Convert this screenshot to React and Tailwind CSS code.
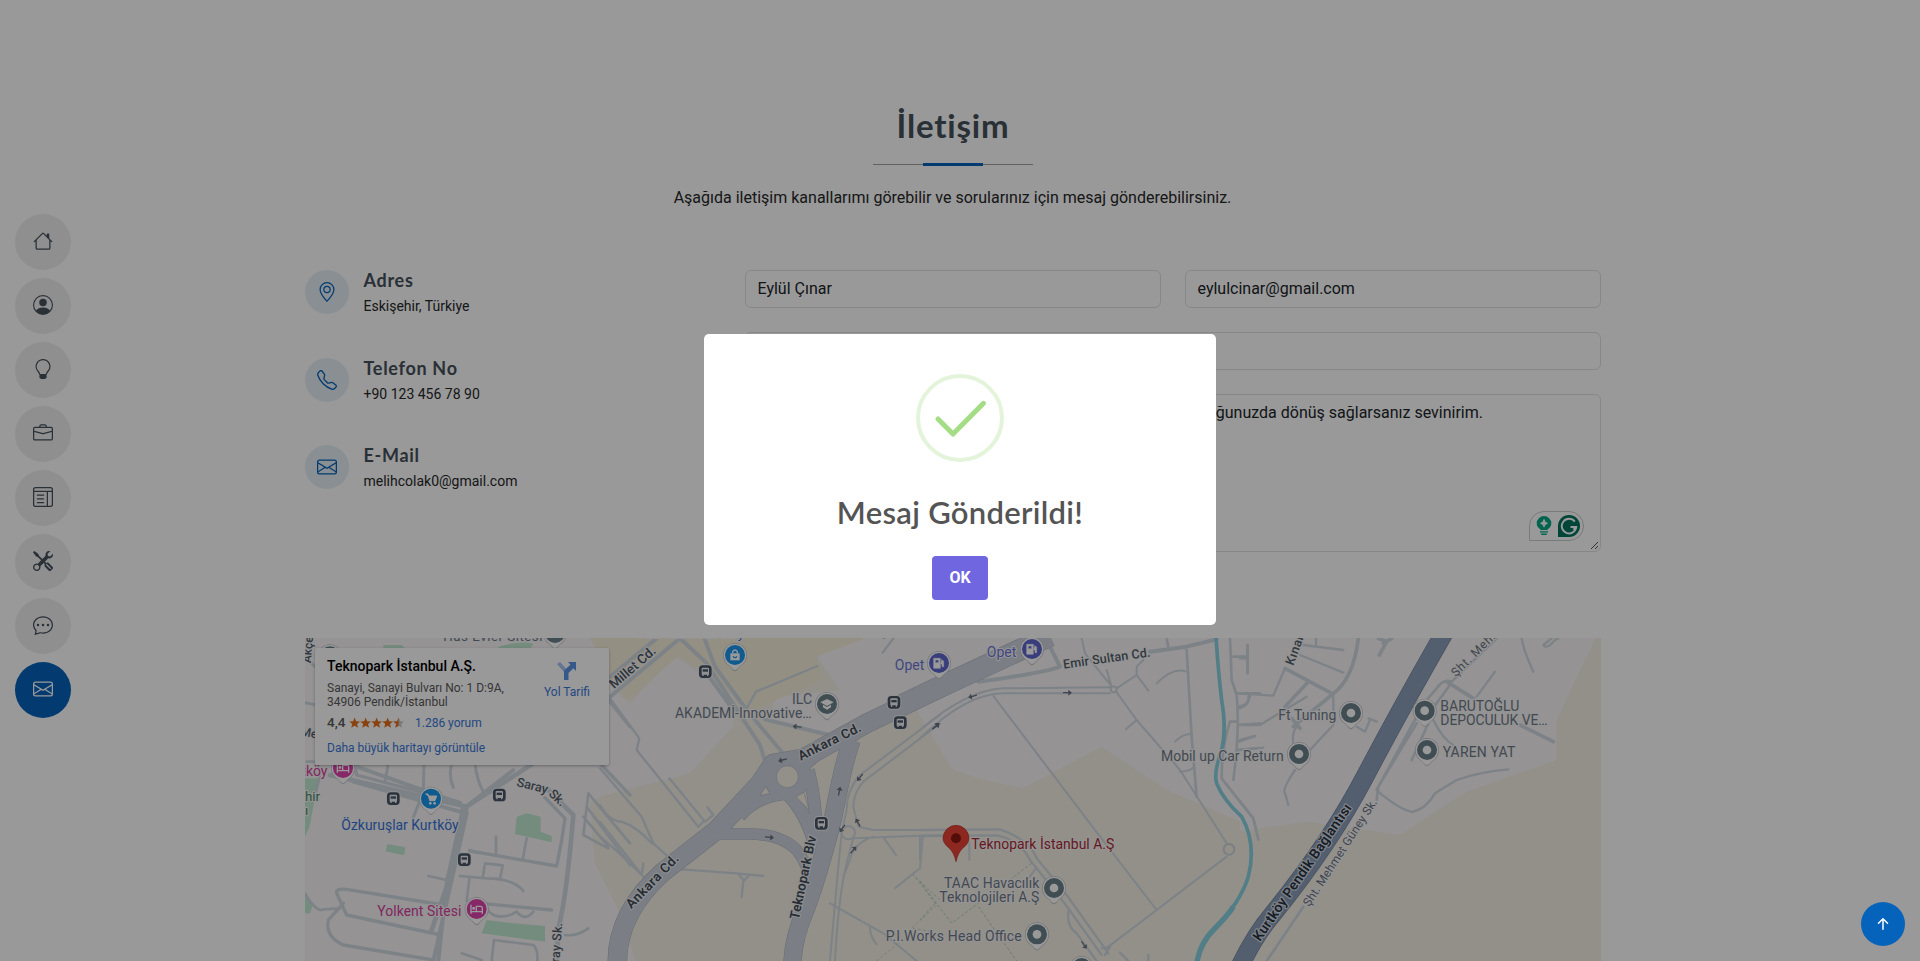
import React from "react";
import {
  BsHouse, BsPersonCircle, BsLightbulb, BsBriefcase, BsLayoutTextWindow, BsTools, BsChatDots,
  BsEnvelope, BsGeoAlt, BsTelephone, BsArrowUpShort,
} from "react-icons/bs";

const NAV = [BsHouse, BsPersonCircle, BsLightbulb, BsBriefcase, BsLayoutTextWindow, BsTools, BsChatDots, BsEnvelope];

const INFO = [
  { icon: BsGeoAlt, title: "Adres", text: "Eskişehir, Türkiye" },
  { icon: BsTelephone, title: "Telefon No", text: "+90 123 456 78 90" },
  { icon: BsEnvelope, title: "E-Mail", text: "melihcolak0@gmail.com" },
];

/* ---------- map ---------- */

// The map is drawn in four tiles, each with three units to a pixel.
const Tile = ({ x, children }) => <g transform={`translate(${x} 630) scale(.33333)`}>{children}</g>;
const TILES = { a: 300, b: 600, c: 920, d: 1240 };

const MINOR = {
  a: [
    ["M20 85L45 110M15 218L50 225M265 400L255 455M372 400L370 480M455 400Q445 440 460 472M525 400Q530 450 550 485M372 480L340 562", 9],
    ["M0 420L60 435M60 435L45 500M680 625L668 690M588 620L588 675M525 665L508 660M548 745L555 700L608 706L600 748M385 738L440 750M480 738L560 745Q640 745 670 783M508 748L500 812M545 815Q570 860 600 860Q630 860 650 845Q670 870 690 855L700 845M15 790Q50 850 70 838L120 835M485 970L545 990M575 993L582 930L700 945Q715 960 712 993M795 915Q830 920 865 895M20 395L60 395M990 705L860 530M850 615L925 655M850 615L865 490L990 640M850 560L925 650", 8],
    ["M440 750L500 550M510 663L770 708Q785 640 795 565L735 503M520 818L755 840M140 855L410 912M110 790Q105 775 140 778L430 825M130 820L85 870Q75 920 130 945L400 990M110 790L140 855M165 405L170 435L480 517M900 400L990 495M930 215L990 290", 10],
    ["M90 435L500 530L700 400M500 530L465 700L395 900M745 480L820 555Q800 800 775 895L770 993", 14],
    ["M170 410L480 520M160 455L480 545L640 420M500 550L400 993M440 760L415 993M490 530L440 760", 12],
  ],
  b: [
    ["M30 205L118 325L110 360L295 590L310 575M208 445L315 575L340 555L322 532M0 415L125 560L160 640L210 685M0 525Q30 575 65 575Q110 590 155 640M0 575L130 740M0 620Q50 660 125 735L130 700M245 718L410 730L490 738M415 732L432 752L448 735M430 752L425 802M210 690L180 730M440 235L468 185L652 108M848 68L880 25", 7],
    ["M0 165L170 25M25 205L240 25L320 100L480 345L500 410M315 30L345 110L440 240L545 365M320 130L400 240M495 268L700 318", 12],
    ["M1020 255L780 435Q740 480 740 540L725 610Q715 700 690 993M1020 280L790 455Q760 490 760 530L775 590L820 600L1020 600M1020 615L760 625L740 700Q715 800 705 993M820 620Q760 640 750 690L730 740", 6],
    ["M690 820L850 910L950 993M810 890Q810 920 830 943M850 622L888 675M968 622L960 715L885 775", 6],
  ],
  c: [
    ["M0 300Q140 180 250 175L570 172M0 325Q140 190 250 190L570 190M220 198L540 620L710 840L565 950M710 840L920 680M585 180L650 270L780 420L920 640M650 270L618 298M590 175L650 135L685 182M650 135L650 110L670 90M710 160Q760 110 800 125M485 25L495 70L580 175M560 120L575 172M765 335Q790 310 815 312M780 425Q810 425 822 410M0 620L0 690M148 640V690M350 712L325 745", 6],
    ["M800 60L815 320L830 500M740 25L745 50M930 25L935 150L950 195Q960 300 940 450M940 80L983 80M983 45V130M950 190L1020 190M955 230Q985 230 990 195M955 285L1020 280M955 335L1005 318M930 275H950M930 275Q905 350 905 445L1000 565L1015 628M955 360L1010 355", 8],
    ["M0 600L240 598Q330 630 350 685L440 795L565 970M0 618L230 616Q300 630 330 690L430 815L545 975M445 845Q440 890 470 910L530 993M545 955L570 950L555 975M600 968L625 993M685 975V993", 7],
    ["M175 155L250 145Q400 120 420 110L390 50M690 65L800 50L890 28", 12],
  ],
  d: [
    ["M0 190L100 197L135 115M22 45V130M0 85H22M180 75L310 128M190 45L310 60M228 25V45M280 190V240L280 285L210 360M0 285L60 285L200 200M0 235Q30 225 25 195M0 330L45 318M0 358L70 353M385 265L410 275M350 290L375 305L390 270M170 290Q155 310 160 340M165 420Q125 480 135 490L145 525M0 515L40 565L55 628M415 485Q480 540 517 546Q560 535 585 490L650 450Q720 425 805 418M765 125L710 200M580 270Q610 330 640 345M845 25Q850 60 880 125M910 45Q920 60 945 30L955 25M910 45L935 25", 7],
    ["M355 25Q340 150 275 195L160 290M135 115L275 190M205 155L135 230M155 265L180 295M840 285L940 335M415 25L440 35L418 75M620 155L700 205M455 25L430 40", 11],
    ["M635 155Q610 145 590 175L560 210M630 165L575 240M640 150L770 25M530 280L415 470L410 510M565 280L515 390M190 830L80 993M530 260L410 480", 8],
  ],
};

const MAJOR = {
  b: [
    ["M1080 145L800 280L610 385L520 400L480 460L350 600L190 725Q50 850 52 1000", 56],
    ["M755 330Q730 400 700 560Q660 720 620 830Q580 920 577 1000", 52],
    ["M600 420Q660 350 770 310M625 420Q650 520 650 640M560 490Q620 550 645 650", 36],
    ["M350 612H440Q540 610 590 660Q615 690 630 740M420 560Q470 500 560 492", 32],
  ],
  c: [["M-60 228L40 180L390 18", 62]],
};

const Arrow = ({ x, y, r }) => (
  <path transform={`translate(${x} ${y}) rotate(${r})`} d="M-13 -2H3V-9L14 0L3 9V2H-13Z" fill="#6b7280" />
);

const Bus = ({ x, y }) => (
  <g transform={`translate(${x} ${y})`}>
    <rect x="-22" y="-22" width="44" height="44" rx="14" fill="#eef2f6" />
    <rect x="-19" y="-19" width="38" height="38" rx="11" fill="#4a5664" />
    <path d="M-11 -9Q-11 -12 -8 -12H8Q11 -12 11 -9V9H9V13H5V9H-5V13H-9V9H-11Z" fill="#eef2f6" />
    <path d="M-8 -7H8V0H-8Z" fill="#4a5664" />
  </g>
);

const Pin = ({ x, y, c, children }) => (
  <g transform={`translate(${x} ${y})`}>
    <path d="M0 48Q-6 46 -15 34Q-36 22 -36 -1A36 36 0 1 1 36 -1Q36 22 15 34Q6 46 0 48Z" fill="#c4c4c8" />
    <path d="M0 45Q-6 43 -15 32Q-34 20 -34 -1A34 34 0 1 1 34 -1Q34 20 15 32Q6 43 0 45Z" fill="#fff" />
    <circle r="30" cy="-1" fill={c} />
    {children || <circle r="13" cy="-1" fill="#fff" />}
  </g>
);

const Bed = () => (
  <g fill="none" stroke="#fff" strokeWidth="4">
    <path d="M-17 -14V13M-17 7H17M17 13V-4Q17 -9 12 -9H-1V7" />
    <circle cx="-9" cy="-3" r="2.5" fill="#fff" />
  </g>
);
const Pump = () => <path d="M-16 -15H4V15H-16ZM-11 -10V-2H-1V-10ZM5 2H9V10H14V-6L8 -12" fill="#fff" fillRule="evenodd" stroke="#fff" strokeWidth="1.5" />;

const Label = ({ x, y, r = 0, size = 42, fill = "#717a86", w = 400, anchor = "start", halo = "#f6f5f6", ls = 0, len, children }) => (
  <text
    transform={`translate(${x} ${y}) rotate(${r})`} fontSize={size} fontWeight={w} fill={fill} textAnchor={anchor}
    stroke={halo} strokeWidth="7" strokeLinejoin="round" letterSpacing={ls} textLength={len}
    className="[paint-order:stroke]"
  >
    {children}
  </text>
);

function MapDrawing() {
  return (
    <svg viewBox="305 638 1296 323" width="1296" height="323" className="block" fontFamily="Roboto, sans-serif">
      <rect x="305" y="638" width="1296" height="323" fill="#f4f0e5" />
      <Tile x={TILES.a}>
        <path d="M0 0H860L930 165L990 220L1125 78L1300 200V290L1170 430L900 500L870 520L885 700L960 850L1010 1000H0Z" fill="#f8f5f7" />
        <path d="M865 0H1240L1290 190L1140 75L980 210L930 140Z" fill="#f7efdb" />
        <path d="M650 560L680 550L722 560V605L755 618V637L645 612ZM262 642L316 652L312 676L257 664ZM560 870L640 880L735 888V935L545 910ZM15 445L58 445L45 505H15ZM15 505H45L28 590L15 620ZM15 790L38 825L30 850H15ZM600 48Q680 30 700 42L690 58H590ZM250 45H305L320 60H250Z" fill="#c2ead2" />
      </Tile>
      <Tile x={TILES.b}>
        <path d="M650 80L770 20H1020V250L940 240L870 270L720 320L495 270L530 200L720 180Z" fill="#f8f5f7" />
        <path d="M340 0H860L650 80L665 150L440 250L400 200Z" fill="#f7efdb" />
      </Tile>
      <Tile x={TILES.c}>
        <path d="M-60 0H1000V590L950 570L740 480L545 350L310 475Q180 450 100 420L30 310L-60 160Z" fill="#f8f5f7" />
      </Tile>
      <Tile x={TILES.d}>
        <path d="M0 0H1080L1050 60L950 270V390L680 485L480 615L200 575L0 605Z" fill="#f8f5f7" />
      </Tile>
      {Object.entries(MINOR).map(([k, list]) => (
        <Tile key={k} x={TILES[k]}>
          {list.map(([d, w]) => (
            <path key={d} d={d} fill="none" stroke="#d0d9e2" strokeWidth={w} strokeLinejoin="round" strokeLinecap="round" />
          ))}
        </Tile>
      ))}
      <Tile x={TILES.b}>
        <circle cx="745" cy="608" r="20" fill="#f4f0e5" stroke="#d0d9e2" strokeWidth="6" />
        <path d="M1020 810L940 735L1010 825L935 895L1000 905M895 940L830 993" fill="none" stroke="#bfd4c8" strokeWidth="3" strokeDasharray="9 6" />
      </Tile>
      <Tile x={TILES.c}>
        <path d="M335 700L95 880L0 755M45 820L0 870M175 830L290 993" fill="none" stroke="#b4ccbf" strokeWidth="3" strokeDasharray="9 6" />
        <circle cx="581" cy="178" r="9" fill="#f8f5f7" stroke="#cdd4dd" strokeWidth="5" />
        <circle cx="927" cy="658" r="16" fill="#f4f0e5" stroke="#cdd4dd" strokeWidth="6" />
        <path d="M888 20Q895 130 905 210Q920 300 905 360Q880 430 890 460Q910 510 965 560Q1010 640 985 740Q960 820 880 900Q840 940 830 1000" fill="none" stroke="#88d2e2" strokeWidth="11" />
        <path d="M940 830Q925 855 880 900Q840 940 830 1000" fill="none" stroke="#88d2e2" strokeWidth="16" />
      </Tile>
      {[["#adb6c4", 3], ["#cdd3dc", 0]].map(([color, extra]) =>
        Object.entries(MAJOR).map(([k, list]) => (
          <Tile key={k + color} x={TILES[k]}>
            {list.map(([d, w]) => (
              <path key={d} d={d} fill="none" stroke={color} strokeWidth={w + extra} strokeLinejoin="round" />
            ))}
            {k === "b" && <circle cx="562" cy="438" r="50" fill="none" stroke={color} strokeWidth={38 + extra} />}
          </Tile>
        ))
      )}
      <Tile x={TILES.b}>
        <circle cx="562" cy="440" r="33" fill="#f4f0e5" stroke="#adb6c4" strokeWidth="2" />
        <path d="M480 497L497 470L510 490ZM588 500L612 487L627 540Z" fill="#f4f0e5" stroke="#adb6c4" strokeWidth="2" />
      </Tile>
      <Tile x={TILES.d}>
        <path d="M-10 1030Q40 920 100 850Q270 640 375 440Q480 240 612 10" fill="none" stroke="#75869d" strokeWidth="56" />
        <path d="M-10 1030Q40 920 100 850Q270 640 375 440Q480 240 612 10" fill="none" stroke="#8a9fb8" strokeWidth="52" />
      </Tile>

      <Tile x={TILES.a}>
        <Label x={430} y={32} size={40} ls={1.5}>Has Evler Sitesi</Label>
        <Pin x={765} y={10} c="#6b828b" />
        <Pin x={90} y={80} c="#6b828b" />
        <Label x={32} y={100} r={-85} size={36} w={500} fill="#565f6b">Akçe</Label>
        <Label x={0} y={316} r={10} size={36} w={500} fill="#565f6b">Mer</Label>
        <Label x={4} y={438} fill="#d8409f">tköy</Label>
        <Label x={15} y={512} fill="#3e8a63" size={40}>hir</Label>
        <Label x={15} y={555} fill="#3e8a63" size={40}>ı</Label>
        <Pin x={129} y={415} c="#e043ad"><Bed /></Pin>
        <Pin x={393} y={507} c="#1a98ee">
          <path d="M-16 -15H-9L-4 5H12L17 -9H-7Z" fill="#fff" stroke="#fff" strokeWidth="3" />
          <circle cx="-2" cy="13" r="4" fill="#fff" /><circle cx="11" cy="13" r="4" fill="#fff" />
        </Pin>
        <Label x={124} y={600} fill="#3572d8" len={352}>Özkuruşlar Kurtköy</Label>
        <Bus x={280} y={506} /><Bus x={598} y={495} /><Bus x={493} y={689} />
        <Label x={232} y={858} fill="#d8409f" len={252}>Yolkent Sitesi</Label>
        <Pin x={530} y={838} c="#e043ad"><Bed /></Pin>
        <Label x={648} y={468} r={14} size={38} w={500} fill="#565f6b">Saray</Label>
        <Label x={744} y={494} r={43} size={38} w={500} fill="#565f6b">Sk.</Label>
        <Label x={775} y={1044} r={-86} size={38} w={500} fill="#565f6b" ls={1}>Saray Sk.</Label>
      </Tile>
      <Tile x={TILES.b}>
        <Label x={42} y={178} r={-41} size={40} w={500} fill="#4b5563">Millet Cd.</Label>
        <Label x={118} y={25} fill="#3572d8" size={40}>Ata Sitesi Kurtköy</Label>
        <Pin x={852} y={-20} c="#6b828b" />
        <Pin x={405} y={76} c="#1a98ee">
          <path d="M-14 -6H14V15H-14Z" fill="#fff" />
          <path d="M-7 -6V-11Q0 -21 7 -11V-6" fill="none" stroke="#fff" strokeWidth="4" />
          <path d="M-6 3Q0 11 6 3" fill="none" stroke="#1a98ee" strokeWidth="3.5" />
        </Pin>
        <Bus x={316} y={125} /><Bus x={882} y={217} /><Bus x={901} y={278} /><Bus x={664} y={580} />
        <Label x={973} y={120} anchor="end" fill="#6e76d6">Opet</Label>
        <Label x={636} y={223} anchor="end">ILC</Label>
        <Label x={635} y={264} anchor="end" len={410}>AKADEMİ-Innovative…</Label>
        <Pin x={681} y={223} c="#6b828b">
          <path d="M-20 -6L0 -16L20 -6L0 5ZM-12 1V9L0 16L12 9V1L0 8Z" fill="#fff" />
        </Pin>
        <Label x={602} y={392} r={-26} size={40} w={600} fill="#434b58" halo="#e9ebef" ls={1}>Ankara Cd.</Label>
        <Label x={94} y={838} r={-46} size={40} w={600} fill="#434b58" halo="#e9ebef" ls={1.4}>Ankara Cd.</Label>
        <Label x={596} y={870} r={-78} size={40} w={600} fill="#434b58" halo="#e9ebef">Teknopark Blv</Label>
        <Arrow x={592} y={290} r={185} /><Arrow x={548} y={390} r={165} /><Arrow x={508} y={622} r={5} />
        <Arrow x={718} y={484} r={-78} /><Arrow x={1008} y={288} r={-40} /><Arrow x={780} y={442} r={130} />
        <Arrow x={727} y={595} r={125} /><Arrow x={774} y={578} r={-120} /><Arrow x={760} y={660} r={-50} />
      </Tile>
      <Tile x={TILES.c}>
        <Pin x={57} y={100} c="#5f67cf"><Pump /></Pin>
        <Label x={289} y={80} anchor="end" fill="#6e76d6">Opet</Label>
        <Pin x={336} y={58} c="#5f67cf"><Pump /></Pin>
        <Label x={431} y={116} r={-8} size={38} w={500} fill="#565f6b" len={264}>Emir Sultan Cd.</Label>
        <Arrow x={158} y={199} r={165} /><Arrow x={442} y={188} r={0} /><Arrow x={47} y={290} r={-38} /><Arrow x={492} y={945} r={55} />
        <path d="M108 695Q102 668 88 655Q69 640 69 625A39 39 0 0 1 147 625Q147 640 128 655Q114 668 108 695Z" fill="#ea4335" stroke="#b9352b" strokeWidth="2" />
        <circle cx="108" cy="625" r="15" fill="#8c1812" />
        <Label x={154} y={657} fill="#ad2a32" len={429}>Teknopark İstanbul A.Ş</Label>
        <Label x={358} y={774} anchor="end" len={286}>TAAC Havacılık</Label>
        <Label x={358} y={816} anchor="end" len={300}>Teknolojileri A.Ş</Label>
        <Pin x={402} y={775} c="#6b828b" />
        <Label x={305} y={933} anchor="end" len={408}>P.I.Works Head Office</Label>
        <Pin x={351} y={914} c="#6b828b" />
        <Pin x={485} y={1015} c="#6b828b" />
      </Tile>
      <Tile x={TILES.d}>
        <Label x={131} y={394} anchor="end" len={368}>Mobil up Car Return</Label>
        <Pin x={177} y={373} c="#6b828b" />
        <Label x={289} y={271} anchor="end" len={174}>Ft Tuning</Label>
        <Pin x={333} y={250} c="#6b828b" />
        <Pin x={554} y={243} c="#6b828b" />
        <Label x={601} y={243} len={237}>BARUTOĞLU</Label>
        <Label x={601} y={286} len={322}>DEPOCULUK VE…</Label>
        <Pin x={561} y={361} c="#6b828b" />
        <Label x={608} y={382} len={218}>YAREN YAT</Label>
        <Label x={160} y={108} r={-70} size={38} w={500} fill="#565f6b" ls={1}>Kınalı Sk.</Label>
        <Label x={648} y={142} r={-45} size={36} fill="#6b7280" ls={2.4}>Şht. Mehmet</Label>
        <Label x={60} y={936} r={-55.5} size={42} w={600} fill="#2b3442" halo="#d3dbe6" len={488}>Kurtköy Pendik Bağlantısı</Label>
        <Label x={208} y={832} r={-57} size={36} fill="#6b7280" len={376}>Şht. Mehmet Güney Sk.</Label>
      </Tile>
    </svg>
  );
}

const STAR = "M6 .6L7.6 4.4L11.7 4.7L8.6 7.4L9.6 11.4L6 9.2L2.4 11.4L3.4 7.4L.3 4.7L4.4 4.4Z";

function PlaceCard() {
  return (
    <div className="absolute left-[10px] top-[10px] flex h-[117px] w-[294px] justify-between rounded-[2px] bg-white pl-3 pr-[19px] shadow-[0_1px_3px_rgba(0,0,0,0.3)]">
      <div>
        <div className="mt-[10px] text-[14px] font-medium leading-4 text-black">Teknopark İstanbul A.Ş.</div>
        <div className="mt-[7px] w-[200px] whitespace-nowrap text-[12px] leading-[14px] text-[#5b5b5b]">
          Sanayi, Sanayi Bulvarı No: 1 D:9A,<br />34906 Pendik/İstanbul
        </div>
        <div className="mt-[5px] flex h-[17px] items-center text-[12px]">
          <span className="w-[18px] text-[13.500px] font-medium text-[#5b5b5b]">4,4</span>
          <svg width="56" height="12" viewBox="0 0 56 12" className="ml-1">
            {[0, 1, 2, 3].map((i) => <path key={i} d={STAR} transform={`translate(${i * 11} 0) scale(.94)`} fill="#e7711b" />)}
            <g transform="translate(44 0) scale(.94)">
              <path d={STAR} fill="#c9c9c9" />
              <path d="M6 .6V9.2L2.4 11.4L3.4 7.4L.3 4.7L4.4 4.4Z" fill="#e7711b" />
            </g>
          </svg>
          <span className="ml-[10px] text-[#3a78d8]">1.286 yorum</span>
        </div>
        <div className="mt-[10px] text-[12px] leading-[14px] text-[#3a78d8]">Daha büyük haritayı görüntüle</div>
      </div>
      <div className="flex flex-col items-center pt-[13px]">
        <svg width="20" height="20" viewBox="0 0 20 20">
          <path d="M0 3L3 1L9 7.5L7 11Z" fill="#a5c3f2" />
          <path d="M11 1H19V10L16.3 7.3L11.5 12V19H7V9.5L13.5 3.8Z" fill="#5a92e6" />
        </svg>
        <span className="mt-[4px] text-[12px] leading-[14px] text-[#3a78d8]">Yol Tarifi</span>
      </div>
    </div>
  );
}

/* ---------- page ---------- */

function Grammar() {
  return (
    <div className="absolute bottom-[10px] right-4 flex h-[30px] w-[55px] items-center justify-between rounded-[15px] rounded-bl-none border border-[#c9cbd0] pl-[6px] pr-[3px]">
      <svg width="16" height="20" viewBox="0 0 16 20">
        <path d="M8 0A7.3 7.3 0 0 1 15.300 7.300Q15.300 11 12 13L11.500 14H4.500L4 13Q.7 11 .7 7.300A7.300 7.300 0 0 1 8 0Z" fill="#00a884" />
        <path d="M8 3.500Q8.500 6.800 11.500 7.300Q8.500 7.800 8 11.100Q7.500 7.800 4.500 7.300Q7.500 6.800 8 3.500Z" fill="#fff" stroke="#fff" strokeWidth="1" />
        <path d="M4 15.200H12V16.600H4ZM4.600 17.400H11.400Q11 19 9.500 19H6.500Q5 19 4.600 17.400Z" fill="#00a884" />
      </svg>
      <svg width="22" height="22" viewBox="0 0 22 22">
        <path d="M0 22V11A11 11 0 1 1 11 22Z" fill="#00745f" />
        <path d="M16.800 6.600A7.300 7.300 0 1 0 18.300 12H12.500M15.400 14.800L18.300 12" fill="none" stroke="#fff" strokeWidth="1.900" />
      </svg>
    </div>
  );
}

export default function App() {
  return (
    <div className="relative h-[961px] w-[1920px] overflow-hidden bg-white font-[Roboto,sans-serif] text-[#272829]">
      <nav className="absolute left-[15px] top-[214px] flex flex-col gap-2">
        {NAV.map((Icon, i) => (
          <a
            key={i}
            className={
              i === 7
                ? "flex h-14 w-14 items-center justify-center rounded-full bg-[#0563bb] text-white"
                : "flex h-14 w-14 items-center justify-center rounded-full bg-[#eeeeee] text-[#45505b]"
            }
          >
            <Icon className="mb-[2px] h-5 w-5" />
          </a>
        ))}
      </nav>

      <main className="ml-[305px] w-[1296px]">
        <header className="flex flex-col items-center pt-[106px]">
          <h2 className="font-[Lato,sans-serif] text-[33px] font-bold leading-[38px] tracking-[0.8px] text-[#45505b]">İletişim</h2>
          <div className="mt-[19px] flex h-[3px] w-[160px] items-center justify-center">
            <span className="h-px flex-1 bg-[#a2a2a2]" />
            <span className="h-[3px] w-[60px] bg-[#0563bb]" />
            <span className="h-px flex-1 bg-[#a2a2a2]" />
          </div>
          <p className="mr-px mt-5 text-base leading-6">Aşağıda iletişim kanallarımı görebilir ve sorularınız için mesaj gönderebilirsiniz.</p>
        </header>

        <section className="mt-[60px] flex h-[282px]">
          <div className="flex w-[440px] flex-col">
            {INFO.map(({ icon: Icon, title, text }) => (
              <div key={title} className="flex h-[87.600px] gap-[14.500px]">
                <div className="flex h-11 w-11 items-center justify-center rounded-full bg-[#e4eef5] text-[#0563bb]">
                  <Icon className="h-5 w-5" />
                </div>
                <div className="mt-[-1px]">
                  <h4 className="font-[Lato,sans-serif] text-[18px] font-bold leading-[22px] tracking-[0.7px] text-[#45505b]">{title}</h4>
                  <p className="mt-[5px] text-sm leading-[21px]">{text}</p>
                </div>
              </div>
            ))}
          </div>
          <div className="flex flex-1 flex-col gap-6">
            <div className="flex gap-6">
              <div className="flex h-[38px] flex-1 items-center rounded-md border border-[#dee2e6] px-[11.500px] text-[#212529]">Eylül Çınar</div>
              <div className="flex h-[38px] flex-1 items-center rounded-md border border-[#dee2e6] px-[11.500px] text-[#212529]">eylulcinar@gmail.com</div>
            </div>
            <div className="h-[38px] rounded-md border border-[#dee2e6]" />
            <div className="relative h-[158px] rounded-md border border-[#dee2e6] pr-[117px] pt-[6px] text-right leading-6 text-[#212529]">
              olduğunuzda dönüş sağlarsanız sevinirim.
              <Grammar />
              <svg className="absolute bottom-px right-px" width="9" height="9" viewBox="0 0 9 9">
                <path d="M1 8L8 1M5 8L8 5" stroke="#555" strokeWidth="1" />
              </svg>
            </div>
          </div>
        </section>

        <section className="relative mt-[86px] h-[323px] overflow-hidden">
          <MapDrawing />
          <PlaceCard />
        </section>
      </main>

      <div className="absolute inset-0 flex items-center justify-center bg-black/40">
        <div role="dialog" className="mt-[-2px] flex h-[291px] w-[512px] flex-col items-center rounded-[5px] bg-white pt-10">
          <svg width="88" height="88" viewBox="0 0 88 88">
            <circle cx="44" cy="44" r="42" fill="none" stroke="#a5dc86" strokeOpacity=".3" strokeWidth="4" />
            <path d="M22 45L37 60L67.500 29.300" fill="none" stroke="#a5dc86" strokeWidth="5" strokeLinecap="round" strokeLinejoin="round" />
          </svg>
          <h2 className="mt-8 font-[Lato,sans-serif] text-[31px] font-semibold leading-9 tracking-[0.300px] text-[#545454]">Mesaj Gönderildi!</h2>
          <button className="mt-[26px] h-11 w-14 rounded-[4px] bg-[#7066e0] text-base font-bold text-white">OK</button>
        </div>
      </div>

      <div className="absolute bottom-[15px] right-[15px] flex h-11 w-11 items-center justify-center rounded-full bg-[#0563bb] text-white">
        <BsArrowUpShort className="h-6 w-6" />
      </div>
    </div>
  );
}
